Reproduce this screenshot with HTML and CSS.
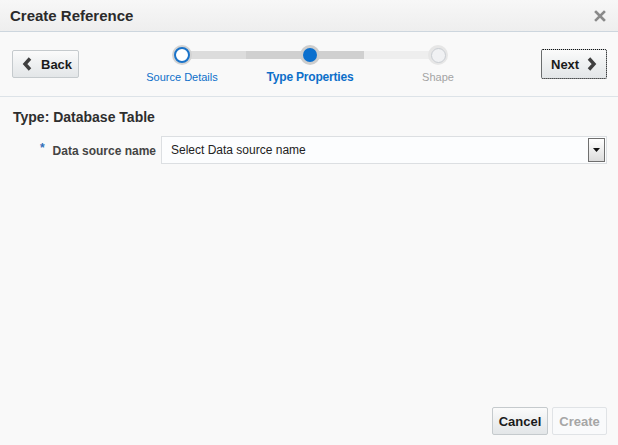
FILE: index.html
```html
<!DOCTYPE html>
<html>
<head>
<meta charset="utf-8">
<link rel="stylesheet" href="styles.css">
</head>
<body>
<div class="dialog">
  <div class="header">
    <span class="title">Create Reference</span>
    <svg class="close" width="12" height="12" viewBox="0 0 12 12"><path d="M2 2 L10 10 M10 2 L2 10" stroke="#8a8a8a" stroke-width="2.6" stroke-linecap="square"/></svg>
  </div>
  <div class="trainbar">
    <button class="btn nav back"><svg width="10" height="14" viewBox="0 0 10 14"><path d="M8 1.5 L3 7 L8 12.5" fill="none" stroke="#3f3f3f" stroke-width="3.4"/></svg><span>Back</span></button>
    <div class="train">
      <div class="stop s1"><span class="dot done"></span><span class="lbl">Source Details</span></div>
      <div class="stop s2"><span class="dot cur"></span><span class="lbl cur">Type Properties</span></div>
      <div class="stop s3"><span class="dot off"></span><span class="lbl off">Shape</span></div>
    </div>
    <button class="btn nav next focus"><span>Next</span><svg width="10" height="14" viewBox="0 0 10 14"><path d="M2 1.5 L7 7 L2 12.5" fill="none" stroke="#3f3f3f" stroke-width="3.4"/></svg></button>
  </div>
  <div class="content">
    <h2 class="type">Type: Database Table</h2>
    <div class="row">
      <label class="flabel"><span class="req">*</span>Data source name</label>
      <div class="select">
        <span>Select Data source name</span>
        <span class="drop"><svg width="7" height="4" viewBox="0 0 7 4"><path d="M0 0 H7 L3.5 4 Z" fill="#111"/></svg></span>
      </div>
    </div>
  </div>
  <div class="footer">
    <button class="btn cancel">Cancel</button>
    <button class="btn create" disabled>Create</button>
  </div>
</div>
</body>
</html>
```
FILE: styles.css
```css
* { box-sizing: border-box; }
html, body { margin: 0; padding: 0; }
body {
  font-family: "Liberation Sans", Arial, sans-serif;
  background: #f9f9f9;
  color: #333;
}
.dialog {
  width: 618px;
  height: 445px;
  display: flex;
  flex-direction: column;
}
.header {
  height: 32px;
  flex: none;
  display: flex;
  align-items: center;
  justify-content: space-between;
  padding: 0 12px 0 10px;
  background: linear-gradient(#f7f7f7, #eeeeee);
  border-bottom: 1px solid #cdd6de;
}
.title {
  font-size: 15px;
  font-weight: bold;
  color: #2b2b2b;
}
.trainbar {
  height: 65px;
  flex: none;
  display: flex;
  align-items: flex-start;
  padding: 0 11px 0 12px;
  border-bottom: 1px solid #dde3e8;
}
.btn {
  font-family: "Liberation Sans", Arial, sans-serif;
  font-size: 13px;
  font-weight: bold;
  color: #1a1a1a;
  height: 28px;
  border: 1px solid #c5cacd;
  border-radius: 2px;
  background: linear-gradient(#fbfbfb, #eef0f1 50%, #e3e6e8);
  padding: 0;
  display: flex;
  align-items: center;
}
.nav { margin-top: 18px; }
.back {
  width: 67px;
  padding-left: 9px;
  gap: 9px;
}
.next {
  width: 66px;
  margin-left: auto;
  padding-left: 9px;
  gap: 8px;
  margin-top: 17px;
  height: 30px;
  outline: 1px dotted #111;
  outline-offset: -1px;
}
.train {
  display: flex;
  margin-left: 39px;
  padding-top: 13px;
}
.stop {
  width: 128px;
  display: flex;
  flex-direction: column;
  align-items: center;
  position: relative;
}
.stop::before, .stop::after {
  content: "";
  position: absolute;
  top: 6px;
  height: 8px;
}
.s1::after { left: 64px; width: 64px; background: #dcdcdc; }
.s2::before { left: 0; width: 64px; background: #d0d0d0; }
.s2::after { left: 64px; width: 54px; background: #d0d0d0; }
.s3::before { left: -10px; width: 74px; background: #eeeeee; }
.dot {
  width: 20px;
  height: 20px;
  border-radius: 50%;
  position: relative;
  z-index: 1;
  display: flex;
  align-items: center;
  justify-content: center;
  background: #d2d2d2;
}
.dot::after {
  content: "";
  width: 12px;
  height: 12px;
  border-radius: 50%;
}
.dot.done::after { background: #fff; border: 2px solid #1a73c9; }
.dot.cur { background: #cdcdcd; }
.dot.cur::after { width: 14px; height: 14px; background: #0a6fce; }
.dot.off { background: #e6e6e6; }
.dot.off::after { background: #f0f1f3; border: 1px solid #c9cdd2; width: 13px; height: 13px; }
.lbl {
  margin-top: 5px;
  font-size: 11px;
  line-height: 14px;
  color: #0d6fc9;
  white-space: nowrap;
}
.lbl.cur { font-weight: bold; font-size: 12px; letter-spacing: -0.2px; }
.lbl.off { color: #a4a4a4; }
.content {
  flex: 1;
  padding: 12px 11px 0 13px;
}
.type {
  margin: 0;
  font-size: 14px;
  line-height: 16px;
  font-weight: bold;
  color: #2e2e2e;
}
.row {
  display: flex;
  align-items: center;
  margin-top: 11px;
}
.flabel {
  width: 143px;
  text-align: right;
  font-size: 12px;
  font-weight: bold;
  color: #444;
  margin-right: 5px;
  margin-top: -2px;
}
.req {
  color: #2f6fb9;
  margin-right: 8px;
  font-size: 12px;
  vertical-align: 3px;
}
.select {
  flex: 1;
  height: 28px;
  border: 1px solid #dcdfe2;
  background: #fcfdfe;
  display: flex;
  align-items: center;
  justify-content: space-between;
  padding-left: 9px;
  padding-right: 1px;
  font-size: 12px;
  color: #222;
}
.drop {
  width: 17px;
  height: 24px;
  border: 1px solid #6f6f6f;
  background: linear-gradient(#ffffff, #dcdcdc);
  display: flex;
  align-items: center;
  justify-content: center;
}
.footer {
  flex: none;
  display: flex;
  justify-content: flex-end;
  gap: 4px;
  padding: 0 11px 10px 0;
}
.cancel {
  width: 56px;
  justify-content: center;
}
.create {
  width: 55px;
  justify-content: center;
  color: #a6a6a6;
  background: #f9fafb;
  border-color: #e0e3e6;
}
```
